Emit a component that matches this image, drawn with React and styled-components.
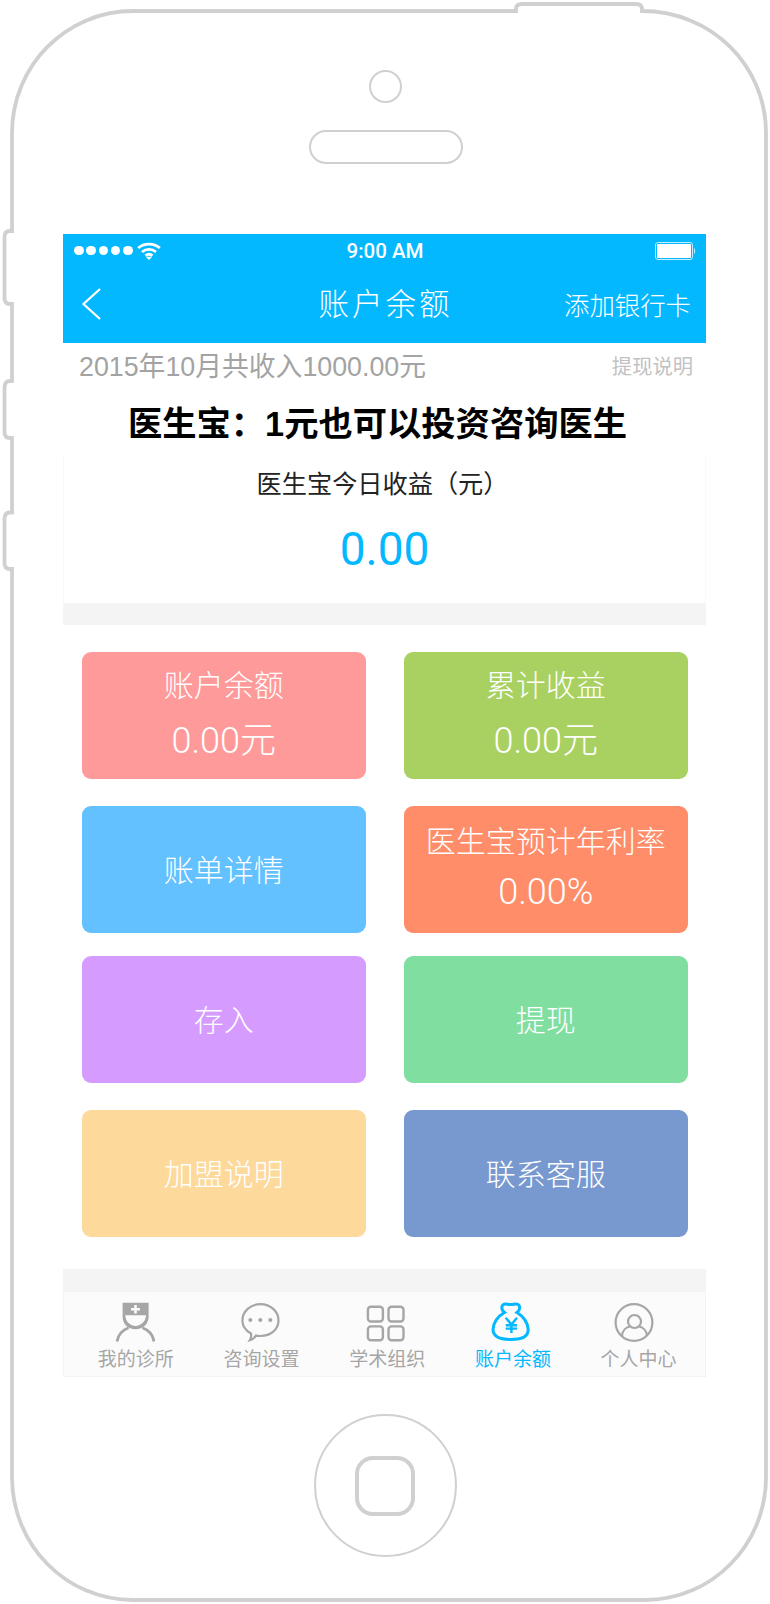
import React from 'react';
import styled, { createGlobalStyle } from 'styled-components';

const CJK = '"Liberation Sans", "Noto Sans CJK SC", sans-serif';
const LINE = '#d0d0d0';
const BRAND = '#03b8ff';

const GlobalStyle = createGlobalStyle`
  html, body {
    margin: 0;
    background: #fff;
  }
  body {
    font-family: ${CJK};
  }
`;

const Shell = styled.div`
  position: relative;
  width: 770px;
  height: 1604px;
  padding-top: 70px;
  box-sizing: border-box;
  display: flex;
  flex-direction: column;
  align-items: center;
  overflow: hidden;
`;

const FrameArt = styled.svg`
  position: absolute;
  left: 0;
  top: 0;
`;

const Camera = styled.div`
  position: relative;
  width: 33px;
  height: 33px;
  box-sizing: border-box;
  border: 2px solid ${LINE};
  border-radius: 50%;
`;

const Speaker = styled.div`
  position: relative;
  margin: 27px 0 0 2px;
  width: 154px;
  height: 34px;
  box-sizing: border-box;
  border: 2px solid ${LINE};
  border-radius: 17px;
`;

const Screen = styled.div`
  position: relative;
  margin: 70px 1px 0 0;
  width: 643px;
  height: 1143px;
  background: #fff;
  display: flex;
  flex-direction: column;
`;

const StatusBar = styled.div`
  height: 40px;
  box-sizing: border-box;
  background: ${BRAND};
  color: #fff;
  display: grid;
  grid-template-columns: 1fr auto 1fr;
  align-items: center;
  padding: 0 10px 7px 11px;
  font-family: Roboto, sans-serif;
  font-weight: 500;
  font-size: 20.5px;
`;

const Signal = styled.div`
  display: flex;
  align-items: center;
  gap: 2.8px;
`;

const Dot = styled.span`
  width: 9.5px;
  height: 9.5px;
  border-radius: 50%;
  background: #fff;
`;

const Wifi = styled.svg`
  margin-left: 2px;
`;

const Battery = styled.svg`
  justify-self: end;
`;

const NavBar = styled.div`
  height: 69px;
  box-sizing: border-box;
  background: ${BRAND};
  color: #fff;
  display: grid;
  grid-template-columns: 1fr auto 1fr;
  align-items: center;
  padding: 0 15px 10px 17px;
`;

const NavTitle = styled.div`
  margin-bottom: 4px;
  font-size: 30.5px;
  font-weight: 300;
  letter-spacing: 3px;
`;

const NavAction = styled.div`
  justify-self: end;
  font-size: 25.4px;
  font-weight: 300;
`;

const SummaryRow = styled.div`
  height: 46px;
  box-sizing: border-box;
  display: flex;
  align-items: center;
  justify-content: space-between;
  padding: 0 13px 3px 16px;
`;

const SummaryText = styled.span`
  font-size: 26.8px;
  color: #a3a3a3;
`;

const SummaryLink = styled.span`
  font-size: 20.3px;
  color: #c2c2c2;
`;

const Headline = styled.div`
  height: 66px;
  box-sizing: border-box;
  padding: 0 14px 2px 0;
  display: flex;
  align-items: center;
  justify-content: center;
  font-size: 34.3px;
  font-weight: 700;
  color: #000;
`;

const Earnings = styled.div`
  height: 148px;
  display: flex;
  flex-direction: column;
  align-items: center;
  border: solid #f9f9f9;
  border-width: 0 1px;
`;

const EarningsLabel = styled.div`
  margin: 11px 4px 0 0;
  height: 36px;
  line-height: 36px;
  font-size: 25.2px;
  color: #222;
`;

const EarningsValue = styled.div`
  margin-top: 19px;
  height: 56px;
  line-height: 56px;
  font-family: Roboto, sans-serif;
  font-size: 46px;
  color: ${BRAND};
`;

const Band = styled.div`
  height: ${(p) => p.$height}px;
  background: #f4f4f4;
`;

const Board = styled.div`
  height: 644px;
  display: flex;
  flex-direction: column;
  padding: 0 18.5px 0 19px;
  box-sizing: border-box;
`;

const CardRow = styled.div`
  margin-top: ${(p) => p.$top}px;
  display: grid;
  grid-template-columns: 283.5px 283.5px;
  justify-content: space-between;
`;

const Card = styled.div`
  height: 127px;
  box-sizing: border-box;
  padding: ${(p) => (p.$gap ? '0 0 5px' : '2px 0 0')};
  border-radius: 9px;
  background: ${(p) => p.$color};
  color: #fff;
  display: flex;
  flex-direction: column;
  align-items: center;
  justify-content: center;
  gap: ${(p) => p.$gap || 0}px;
  font-size: 30px;
  font-weight: 300;
  line-height: 40px;
`;

const CardAmount = styled.div`
  font-family: Roboto, "Noto Sans CJK SC", sans-serif;
  font-size: 36px;
  font-weight: 300;
`;

const TabBar = styled.div`
  height: 86px;
  box-sizing: border-box;
  background: #fbfbfb;
  border: 1px solid #f3f3f3;
  display: grid;
  grid-template-columns: repeat(5, 125.7px);
  padding-left: 9px;
`;

const Tab = styled.div`
  display: flex;
  flex-direction: column;
  align-items: center;
  padding-top: 10px;
  color: ${(p) => (p.$active ? BRAND : '#a6a6a6')};
`;

const IconSlot = styled.div`
  height: 42px;
  margin-right: ${(p) => p.$nudge || 0}px;
`;

const TabIcon = styled.svg`
  display: block;
`;

const TabLabel = styled.div`
  margin-top: 3px;
  font-size: 19px;
  line-height: 26px;
`;

const HomeButton = styled.div`
  position: relative;
  margin-top: 37px;
  width: 143px;
  height: 143px;
  box-sizing: border-box;
  border: 2px solid ${LINE};
  border-radius: 50%;
  display: flex;
  align-items: center;
  justify-content: center;
`;

const HomeSquare = styled.div`
  width: 60px;
  height: 60px;
  box-sizing: border-box;
  border: 4px solid ${LINE};
  border-radius: 18px;
`;

function PhoneOutline() {
  return (
    <FrameArt width="770" height="1604" viewBox="0 0 770 1604" fill="none" stroke={LINE} strokeWidth="3.8">
      <path d="M516 11 V9 Q516 4 522 4 H636 Q642 4 642 9 V11 C712 11 766 66 766 133 V1477 C766 1545 712 1600 645 1600 H133 C66 1600 12 1545 12 1477 V569 H10 Q4.500 569 4.500 563 V519 Q4.500 512.500 10 512.500 H12 V438 H10 Q4.500 438 4.500 432 V388 Q4.500 381 10 381 H12 V304 H10 Q4.500 304 4.500 298 V237 Q4.500 231 10 231 H12 V133 C12 66 66 11 133 11 Z" />
    </FrameArt>
  );
}

function Nurse() {
  return (
    <TabIcon width="40" height="42" viewBox="0 0 40 42" fill="none">
      <path
        fillRule="evenodd"
        fill="currentColor"
        d="M7.600 0.700 H33.600 V15 C33.600 22 28 27.300 20.500 27.300 C13 27.300 7.600 22 7.600 15 Z M10.300 13.300 H31 C31 19 26 24 20.500 24 C15 24 10.300 19 10.300 13.300 Z"
      />
      <path d="M16 7.300 H25 M20.500 3 V11.500" stroke="#fbfbfb" strokeWidth="2.600" />
      <path d="M2 39.500 C3 33 8 28 13.500 25.800 M39 39.500 C38 33 33 28 27.500 25.800" stroke="currentColor" strokeWidth="2.800" />
    </TabIcon>
  );
}

function Chat() {
  return (
    <TabIcon width="40" height="42" viewBox="0 0 40 42" fill="none">
      <path
        d="M11 31.500 C5.500 28.500 2.400 24 2.400 18.500 C2.400 9.500 10.500 2.100 20.500 2.100 C30.500 2.100 38.500 9.500 38.500 18.500 C38.500 27.500 30.500 34 20.500 34 C19 34 17.500 34 16 33.600 C14.500 35.800 12.500 37.300 9.800 38.200 C11 36.200 11.400 34 11 31.500 Z"
        stroke="currentColor"
        strokeWidth="2.200"
      />
      <circle cx="10.300" cy="18" r="2" fill="currentColor" />
      <circle cx="20.300" cy="18" r="2" fill="currentColor" />
      <circle cx="30.300" cy="18" r="2" fill="currentColor" />
    </TabIcon>
  );
}

function Squares() {
  return (
    <TabIcon width="40" height="42" viewBox="0 0 40 42" fill="none" stroke="currentColor" strokeWidth="2.400">
      <rect x="1.900" y="4.700" width="15" height="14.800" rx="3" />
      <rect x="22.500" y="4.700" width="15" height="14.800" rx="3" />
      <rect x="1.900" y="24.400" width="15" height="13.800" rx="3" />
      <rect x="22.500" y="24.400" width="15" height="13.800" rx="3" />
    </TabIcon>
  );
}

function MoneyBag() {
  return (
    <TabIcon width="40" height="42" viewBox="0 0 40 42" fill="none" stroke="currentColor">
      <path
        d="M14.500 10.500 C12.500 9 11.500 7 12 4.500 C12.500 2.500 15 1.800 17.500 2.200 C19.500 2.500 22 2.500 24 2.200 C26.500 1.800 29 2.500 29.500 4.500 C30 7 29 9 27 10.500 C33 14 38.200 21 38.200 27.500 C38.200 34 33 37.500 21 37.500 C9 37.500 3 34 3 27.500 C3 21 8 14 14.500 10.500 Z"
        strokeWidth="3"
      />
      <path d="M15.700 15.700 L21.400 22.500 L27 15.700 M21.400 22.500 V31 M15.700 23.300 H27 M15.700 26.600 H27" strokeWidth="2.400" />
    </TabIcon>
  );
}

function Person() {
  return (
    <TabIcon width="40" height="42" viewBox="0 0 40 42" fill="none" stroke="currentColor" strokeWidth="2.200">
      <circle cx="20" cy="20.500" r="18.400" />
      <circle cx="20.500" cy="19.500" r="6.500" />
      <path d="M8 34 C8.500 28 12.500 25 16 24.500 M33 34 C32.500 28 28.500 25 25 24.500" />
    </TabIcon>
  );
}

const TABS = [
  { label: '我的诊所', Icon: Nurse, nudge: 1 },
  { label: '咨询设置', Icon: Chat, nudge: 3 },
  { label: '学术组织', Icon: Squares, nudge: 3 },
  { label: '账户余额', Icon: MoneyBag, nudge: 5, active: true },
  { label: '个人中心', Icon: Person, nudge: 10 },
];

const ROWS = [
  {
    top: 27,
    cards: [
      { color: '#ff9a9a', title: '账户余额', amount: '0.00元', gap: 15 },
      { color: '#a9d161', title: '累计收益', amount: '0.00元', gap: 15 },
    ],
  },
  {
    top: 27,
    cards: [
      { color: '#63c1ff', title: '账单详情' },
      { color: '#ff8d69', title: '医生宝预计年利率', amount: '0.00%', gap: 10 },
    ],
  },
  {
    top: 23,
    cards: [
      { color: '#d69bff', title: '存入' },
      { color: '#80dea0', title: '提现' },
    ],
  },
  {
    top: 27,
    cards: [
      { color: '#fdd99b', title: '加盟说明' },
      { color: '#7899cf', title: '联系客服' },
    ],
  },
];

export default function App() {
  return (
    <>
      <GlobalStyle />
      <Shell>
        <PhoneOutline />
        <Camera />
        <Speaker />
        <Screen>
          <StatusBar>
            <Signal>
              <Dot />
              <Dot />
              <Dot />
              <Dot />
              <Dot />
              <Wifi width="24" height="18" viewBox="0 0 24 18" fill="none" stroke="#fff" strokeWidth="2.800">
                <path d="M1.200 6 C7 0.800 17 0.800 22.800 6" />
                <path d="M5 10 C9 6.500 15 6.500 19 10" />
                <path d="M8.500 13.600 C10.500 12 13.500 12 15.500 13.600" />
                <path d="M12 18 L8.800 14.800 H15.200 Z" fill="#fff" stroke="none" />
              </Wifi>
            </Signal>
            <span>9:00 AM</span>
            <Battery width="41" height="18" viewBox="0 0 41 18">
              <rect x="0.500" y="0.500" width="37" height="17" rx="2.500" fill="none" stroke="#bfeeff" />
              <rect x="2" y="2" width="34" height="14" rx="1" fill="#fff" />
              <path d="M39 6 C40.500 6.500 40.500 11.500 39 12 Z" fill="#bfeeff" />
            </Battery>
          </StatusBar>
          <NavBar>
            <svg width="22" height="36" viewBox="0 0 22 36" fill="none" stroke="#fff" strokeWidth="2.300">
              <path d="M20 3 L3.500 18 L20 33" />
            </svg>
            <NavTitle>账户余额</NavTitle>
            <NavAction>添加银行卡</NavAction>
          </NavBar>
          <SummaryRow>
            <SummaryText>2015年10月共收入1000.00元</SummaryText>
            <SummaryLink>提现说明</SummaryLink>
          </SummaryRow>
          <Headline>医生宝：1元也可以投资咨询医生</Headline>
          <Earnings>
            <EarningsLabel>医生宝今日收益（元）</EarningsLabel>
            <EarningsValue>0.00</EarningsValue>
          </Earnings>
          <Band $height={22} />
          <Board>
            {ROWS.map((row) => (
              <CardRow key={row.cards[0].title} $top={row.top}>
                {row.cards.map((card) => (
                  <Card key={card.title} $color={card.color} $gap={card.gap}>
                    <div>{card.title}</div>
                    {card.amount && <CardAmount>{card.amount}</CardAmount>}
                  </Card>
                ))}
              </CardRow>
            ))}
          </Board>
          <Band $height={22} />
          <TabBar>
            {TABS.map(({ label, Icon, nudge, active }) => (
              <Tab key={label} $active={active}>
                <IconSlot $nudge={nudge}>
                  <Icon />
                </IconSlot>
                <TabLabel>{label}</TabLabel>
              </Tab>
            ))}
          </TabBar>
        </Screen>
        <HomeButton>
          <HomeSquare />
        </HomeButton>
      </Shell>
    </>
  );
}
